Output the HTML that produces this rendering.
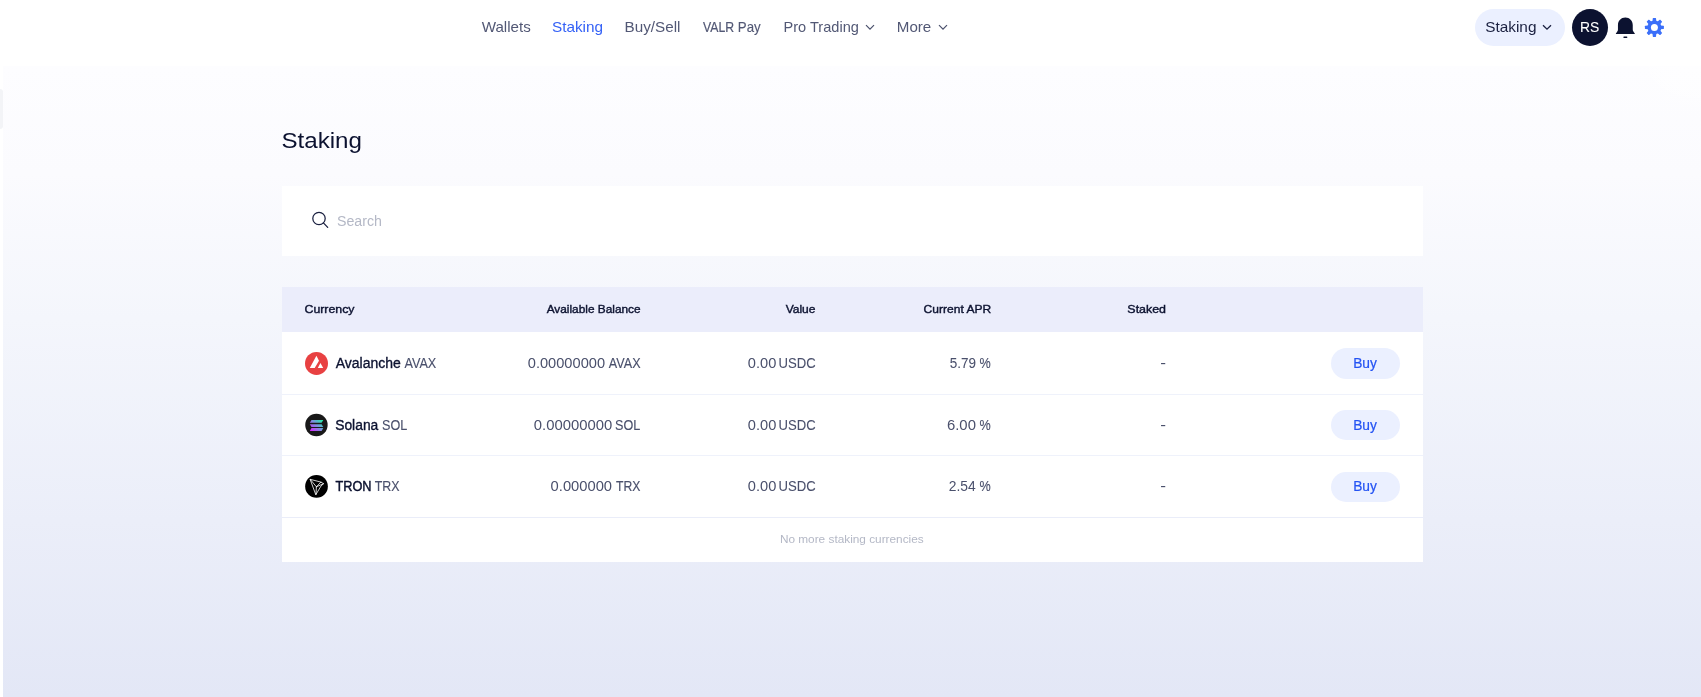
<!DOCTYPE html>
<html lang="en">
<head>
<meta charset="utf-8">
<title>Staking</title>
<style>
*{box-sizing:border-box;margin:0;padding:0}
html,body{width:1701px;height:697px;overflow:hidden;background:#fff}
body{font-family:"Liberation Sans",sans-serif;color:#0c1230;position:relative}
.abs{position:absolute}
#bg{left:3px;top:66px;width:1698px;height:631px;background:radial-gradient(ellipse 90px 55px at 100% 0%,rgba(255,255,255,.6),rgba(255,255,255,0)),linear-gradient(180deg,#fdfdff 0%,#fbfbfe 17%,#f4f6fc 40%,#ebeef9 72%,#e3e7f6 100%)}
#tab{left:0;top:89px;width:3px;height:39.5px;background:#f3f4f7;border-radius:0 3px 3px 0}
#hdr{left:0;top:0;width:1701px;height:66px;background:#fff}
#pill{left:1475px;top:9px;width:90px;height:37px;border-radius:18.5px;background:#ebf0ff}
#ava{left:1572px;top:9px;width:36px;height:37px;border-radius:50%;background:#0c1230}
#search{left:282px;top:186px;width:1141px;height:70px;background:#fff}
#tbl{left:282px;top:287px;width:1141px;height:275px;background:#fff}
#th{left:282px;top:287px;width:1141px;height:45px;background:#ebedfb}
.sep{left:282px;width:1141px;height:1px;background:#eff2fb}
.buy{left:1331px;width:69px;height:30.75px;border-radius:16px;background:#ebf0ff}
.x{position:absolute;line-height:20px;white-space:pre;font-weight:400;transform-origin:0 0;left:0;top:0}
.g{display:contents;font-size:inherit;font-weight:inherit}
</style>
</head>
<body>
<div id="hdr" class="abs"></div>
<div id="bg" class="abs"></div>
<div id="tab" class="abs"></div>

<svg class="abs" style="left:865px;top:24px" width="10" height="7" viewBox="0 0 10 7"><path d="M1 1.2 L5 5.2 L9 1.2" fill="none" stroke="#4a506c" stroke-width="1.2"/></svg>
<svg class="abs" style="left:938px;top:24px" width="10" height="7" viewBox="0 0 10 7"><path d="M1 1.2 L5 5.2 L9 1.2" fill="none" stroke="#4a506c" stroke-width="1.2"/></svg>

<div id="pill" class="abs"></div>
<svg class="abs" style="left:1542px;top:24px" width="10" height="7" viewBox="0 0 10 7"><path d="M1 1.2 L5 5.2 L9 1.2" fill="none" stroke="#1a2040" stroke-width="1.3"/></svg>
<div id="ava" class="abs"></div>

<svg class="abs" style="left:1615px;top:17px" width="21" height="22" viewBox="0 0 21 22"><path d="M10.35 0.5 C6.1 0.5 2.95 3.7 2.95 8 V12.4 C2.95 13.6 2.3 14.6 0.9 16.4 V17 H19.8 V16.4 C18.4 14.6 17.75 13.6 17.75 12.4 V8 C17.75 3.7 14.6 0.5 10.35 0.5 Z" fill="#0c1230"/><rect x="8.3" y="19.5" width="4.1" height="1.6" rx="0.8" fill="#0c1230"/></svg>

<svg class="abs" style="left:1644px;top:17px" width="21" height="21" viewBox="-10.5 -10.5 21 21"><g transform="translate(-0.1,-0.1)"><g fill="#3b6ff9"><circle r="6.95"/><path d="M-1.95 -6 L-1.6 -9.1 Q-1.55 -9.5 -1.15 -9.5 H1.15 Q1.55 -9.5 1.6 -9.1 L1.95 -6 Z" transform="rotate(0)"/><path d="M-1.95 -6 L-1.6 -9.1 Q-1.55 -9.5 -1.15 -9.5 H1.15 Q1.55 -9.5 1.6 -9.1 L1.95 -6 Z" transform="rotate(45)"/><path d="M-1.95 -6 L-1.6 -9.1 Q-1.55 -9.5 -1.15 -9.5 H1.15 Q1.55 -9.5 1.6 -9.1 L1.95 -6 Z" transform="rotate(90)"/><path d="M-1.95 -6 L-1.6 -9.1 Q-1.55 -9.5 -1.15 -9.5 H1.15 Q1.55 -9.5 1.6 -9.1 L1.95 -6 Z" transform="rotate(135)"/><path d="M-1.95 -6 L-1.6 -9.1 Q-1.55 -9.5 -1.15 -9.5 H1.15 Q1.55 -9.5 1.6 -9.1 L1.95 -6 Z" transform="rotate(180)"/><path d="M-1.95 -6 L-1.6 -9.1 Q-1.55 -9.5 -1.15 -9.5 H1.15 Q1.55 -9.5 1.6 -9.1 L1.95 -6 Z" transform="rotate(225)"/><path d="M-1.95 -6 L-1.6 -9.1 Q-1.55 -9.5 -1.15 -9.5 H1.15 Q1.55 -9.5 1.6 -9.1 L1.95 -6 Z" transform="rotate(270)"/><path d="M-1.95 -6 L-1.6 -9.1 Q-1.55 -9.5 -1.15 -9.5 H1.15 Q1.55 -9.5 1.6 -9.1 L1.95 -6 Z" transform="rotate(315)"/></g><circle r="3.5" fill="#fff"/></g></svg>

<div id="search" class="abs"></div>
<svg class="abs" style="left:311px;top:211px" width="18" height="18" viewBox="0 0 18 18"><circle cx="8" cy="7.5" r="6.2" fill="none" stroke="#1a2040" stroke-width="1.25"/><path d="M12.4 11.9 L16.7 16.4" stroke="#1a2040" stroke-width="1.25" stroke-linecap="round"/></svg>

<div id="tbl" class="abs"></div>
<div id="th" class="abs"></div>
<div class="abs sep" style="top:394px"></div>
<div class="abs sep" style="top:455px"></div>
<div class="abs sep" style="top:517px;background:#eaedf9"></div>
<div class="abs buy" style="top:348px;height:31px"></div>
<div class="abs buy" style="top:410px;height:30px"></div>
<div class="abs buy" style="top:472px;height:30px"></div>

<!-- coin icons -->
<svg class="abs" style="left:304px;top:351px" width="25" height="25" viewBox="304 351 25 25"><circle cx="316.5" cy="363.45" r="11.5" fill="#e84142"/><path d="M309.8 368.1 L316.4 355.8 L319.0 360.65 L314.7 368.1 Z M317.8 368.1 L320.45 362.95 L323.2 368.1 Z" fill="#fff"/></svg>

<svg class="abs" style="left:304px;top:412px" width="25" height="26" viewBox="304 412 25 26"><defs><linearGradient id="sg" gradientUnits="userSpaceOnUse" x1="310.5" y1="431.5" x2="322.5" y2="419.5"><stop offset="0" stop-color="#dc1fff"/><stop offset="0.5" stop-color="#7f8be0"/><stop offset="1" stop-color="#19f7a3"/></linearGradient></defs><circle cx="316.45" cy="425" r="11.2" fill="#191919"/><path d="M309.8 422.8 L311.5 420 H323.3 L321.55 422.8 Z M309.8 424.15 H321.55 L323.3 426.95 H311.5 Z M309.8 430.9 L311.5 428.1 H323.3 L321.55 430.9 Z" fill="url(#sg)"/></svg>

<svg class="abs" style="left:304px;top:474px" width="25" height="25" viewBox="304 474 25 25"><circle cx="316.5" cy="486.4" r="11.35" fill="#000"/><g fill="none" stroke="#fff" stroke-width="0.8" stroke-linejoin="round" stroke-linecap="round"><path d="M310.5 479.4 L320.9 482.1 L323.5 483.7 L321 486 L316 494.4 Z"/><path d="M310.2 479.3 L316.4 486.8 L316 494.4 M316.4 486.8 L320.9 482.1 M316.4 486.8 L323.5 483.7"/></g></svg>

<div id="tx" class="abs" style="left:0;top:0;width:1701px;height:697px;will-change:opacity">
<nav class="g">
<span id="n1" class="x" style="font-size:14.5px;color:#525875;transform:translate(481.65px,17px) scaleX(1.0440)">Wallets</span>
<span id="n2" class="x" style="font-size:14.5px;color:#3562f6;transform:translate(551.96px,17px) scaleX(1.0564)">Staking</span>
<span id="n3" class="x" style="font-size:14.5px;color:#525875;transform:translate(624.52px,17px) scaleX(1.0507)">Buy/Sell</span>
<span id="n4" class="x" style="font-size:14.5px;color:#525875;transform:translate(702.98px,17px) scaleX(0.8441);-webkit-text-stroke:0.23px currentColor">VALR</span>
<span id="n4b" class="x" style="font-size:14.5px;color:#525875;transform:translate(737.87px,17px) scaleX(0.9150);-webkit-text-stroke:0.12px currentColor">Pay</span>
<span id="n5" class="x" style="font-size:14.5px;color:#525875;transform:translate(783.52px,17px) scaleX(1.0050)">Pro Trading</span>
<span id="n6" class="x" style="font-size:14.5px;color:#525875;transform:translate(896.79px,17px) scaleX(1.0438)">More</span>
</nav>
<div class="g">
<span id="pt" class="x" style="font-size:14.5px;color:#1a2040;transform:translate(1485.18px,17px) scaleX(1.0597)">Staking</span>
<span id="rs" class="x" style="font-size:14.5px;color:#ffffff;transform:translate(1579.96px,17px) scaleX(0.9578);-webkit-text-stroke:0.06px currentColor">RS</span>
</div>
<h1 class="g">
<span id="ttl" class="x" style="font-size:22.4px;color:#0c1230;transform:translate(281.40px,131px) scaleX(1.0788)">Staking</span>
</h1>
<div class="g">
<span id="ph" class="x" style="font-size:14px;color:#b4b8c6;transform:translate(336.97px,211px) scaleX(1.0135)">Search</span>
</div>
<div class="g">
<span id="h1" class="x" style="font-size:11.6px;color:#0c1230;transform:translate(304.51px,299px) scaleX(1.0628);-webkit-text-stroke:0.40px currentColor">Currency</span>
<span id="h2" class="x" style="font-size:11.6px;color:#0c1230;transform:translate(546.67px,299px) scaleX(1.0209);-webkit-text-stroke:0.40px currentColor">Available Balance</span>
<span id="h3" class="x" style="font-size:11.6px;color:#0c1230;transform:translate(785.65px,299px) scaleX(1.0358);-webkit-text-stroke:0.40px currentColor">Value</span>
<span id="h4" class="x" style="font-size:11.6px;color:#0c1230;transform:translate(923.61px,299px) scaleX(1.0375);-webkit-text-stroke:0.40px currentColor">Current APR</span>
<span id="h5" class="x" style="font-size:11.6px;color:#0c1230;transform:translate(1127.35px,299px) scaleX(1.0709);-webkit-text-stroke:0.40px currentColor">Staked</span>
</div>
<div class="g">
<span id="a1" class="x" style="font-size:14px;color:#0c1230;transform:translate(335.68px,353px) scaleX(0.9987);-webkit-text-stroke:0.33px currentColor">Avalanche</span>
<span id="a2" class="x" style="font-size:14px;color:#4a506c;transform:translate(404.39px,353px) scaleX(0.9042);-webkit-text-stroke:0.13px currentColor">AVAX</span>
<span id="a3" class="x" style="font-size:14px;color:#4a506c;transform:translate(527.74px,353px) scaleX(1.0452)">0.00000000</span>
<span id="a3t" class="x" style="font-size:14px;color:#4a506c;transform:translate(608.86px,353px) scaleX(0.8983);-webkit-text-stroke:0.14px currentColor">AVAX</span>
<span id="a4" class="x" style="font-size:14px;color:#4a506c;transform:translate(747.84px,353px) scaleX(1.0448)">0.00</span>
<span id="a4t" class="x" style="font-size:14px;color:#4a506c;transform:translate(778.55px,353px) scaleX(0.9363);-webkit-text-stroke:0.09px currentColor">USDC</span>
<span id="a5" class="x" style="font-size:14px;color:#4a506c;transform:translate(949.76px,353px) scaleX(0.9640);-webkit-text-stroke:0.05px currentColor">5.79</span>
<span id="a5t" class="x" style="font-size:14px;color:#4a506c;transform:translate(979.55px,353px) scaleX(0.9012);-webkit-text-stroke:0.14px currentColor">%</span>
<span id="a6" class="x" style="font-size:14px;color:#4a506c;transform:translate(1160.32px,353px) scaleX(1.2301)">-</span>
<span id="a7" class="x" style="font-size:14px;color:#2453f3;transform:translate(1353.14px,353px) scaleX(0.9839);-webkit-text-stroke:0.20px currentColor">Buy</span>
</div>
<div class="g">
<span id="s1" class="x" style="font-size:14px;color:#0c1230;transform:translate(335.17px,415px) scaleX(0.9892);-webkit-text-stroke:0.35px currentColor">Solana</span>
<span id="s2" class="x" style="font-size:14px;color:#4a506c;transform:translate(381.99px,415px) scaleX(0.8996);-webkit-text-stroke:0.14px currentColor">SOL</span>
<span id="s3" class="x" style="font-size:14px;color:#4a506c;transform:translate(533.78px,415px) scaleX(1.0604)">0.00000000</span>
<span id="s3t" class="x" style="font-size:14px;color:#4a506c;transform:translate(614.99px,415px) scaleX(0.8996);-webkit-text-stroke:0.14px currentColor">SOL</span>
<span id="s4" class="x" style="font-size:14px;color:#4a506c;transform:translate(747.84px,415px) scaleX(1.0448)">0.00</span>
<span id="s4t" class="x" style="font-size:14px;color:#4a506c;transform:translate(778.55px,415px) scaleX(0.9333);-webkit-text-stroke:0.09px currentColor">USDC</span>
<span id="s5" class="x" style="font-size:14px;color:#4a506c;transform:translate(946.95px,415px) scaleX(1.0631)">6.00</span>
<span id="s5t" class="x" style="font-size:14px;color:#4a506c;transform:translate(979.55px,415px) scaleX(0.9011);-webkit-text-stroke:0.14px currentColor">%</span>
<span id="s6" class="x" style="font-size:14px;color:#4a506c;transform:translate(1160.32px,415px) scaleX(1.2301)">-</span>
<span id="s7" class="x" style="font-size:14px;color:#2453f3;transform:translate(1353.14px,415px) scaleX(0.9839);-webkit-text-stroke:0.20px currentColor">Buy</span>
</div>
<div class="g">
<span id="t1" class="x" style="font-size:14px;color:#0c1230;transform:translate(335.52px,476px) scaleX(0.9083);-webkit-text-stroke:0.46px currentColor">TRON</span>
<span id="t2" class="x" style="font-size:14px;color:#4a506c;transform:translate(374.63px,476px) scaleX(0.8844);-webkit-text-stroke:0.16px currentColor">TRX</span>
<span id="t3" class="x" style="font-size:14px;color:#4a506c;transform:translate(550.61px,476px) scaleX(1.0523)">0.000000</span>
<span id="t3t" class="x" style="font-size:14px;color:#4a506c;transform:translate(616.00px,476px) scaleX(0.8691);-webkit-text-stroke:0.18px currentColor">TRX</span>
<span id="t4" class="x" style="font-size:14px;color:#4a506c;transform:translate(747.84px,476px) scaleX(1.0448)">0.00</span>
<span id="t4t" class="x" style="font-size:14px;color:#4a506c;transform:translate(778.55px,476px) scaleX(0.9363);-webkit-text-stroke:0.09px currentColor">USDC</span>
<span id="t5" class="x" style="font-size:14px;color:#4a506c;transform:translate(948.81px,476px) scaleX(0.9874)">2.54</span>
<span id="t5t" class="x" style="font-size:14px;color:#4a506c;transform:translate(979.55px,476px) scaleX(0.9012);-webkit-text-stroke:0.14px currentColor">%</span>
<span id="t6" class="x" style="font-size:14px;color:#4a506c;transform:translate(1160.32px,476px) scaleX(1.2301)">-</span>
<span id="t7" class="x" style="font-size:14px;color:#2453f3;transform:translate(1353.14px,476px) scaleX(0.9839);-webkit-text-stroke:0.20px currentColor">Buy</span>
</div>
<div class="g">
<span id="ft" class="x" style="font-size:11.6px;color:#b4b8c6;transform:translate(779.88px,529px) scaleX(1.0191)">No more staking currencies</span>
</div>
</div>
</body>
</html>
